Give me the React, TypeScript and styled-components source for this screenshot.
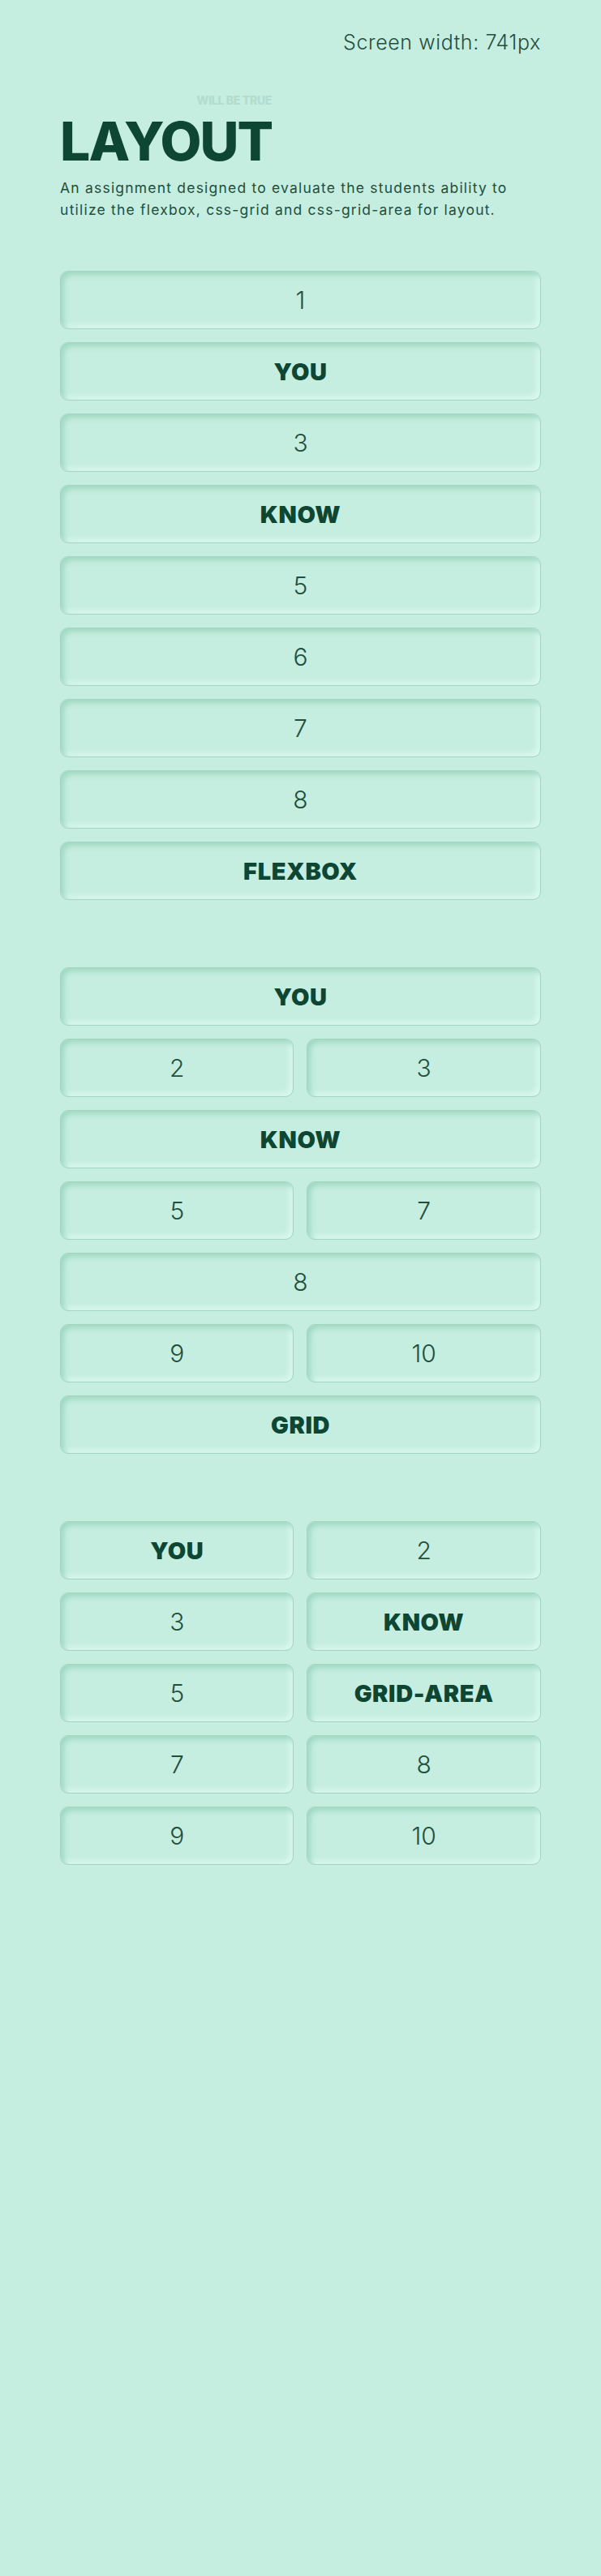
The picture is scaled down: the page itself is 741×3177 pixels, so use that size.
import React from 'react';
import styled, { createGlobalStyle } from 'styled-components';

const Color = {
  bg: '#c5ede0',
  ink: '#0d4633',
  inkSoft: '#1f4f3d',
  ghost: '#b2dccc',
  edgeDark: '#a0d9c3',
  edgeLight: '#daf9ee',
  border: '#a6d4c2'
};

const GlobalStyle = createGlobalStyle`
  html, body {
    margin: 0;
    padding: 0;
    background: ${Color.bg};
  }
  body {
    font-family: Inter, "Open Sans", sans-serif;
    color: ${Color.ink};
    min-height: 100vh;
  }
`;

const Page = styled.div`
  width: 80%;
  margin: 0 auto;
  padding-bottom: 80px;
`;

const ScreenWidth = styled.p`
  margin: 0;
  padding-top: 35px;
  text-align: right;
  font-size: 25px;
  font-weight: 300;
  line-height: 34px;
  letter-spacing: 0.6px;
  color: ${Color.inkSoft};
`;

const Header = styled.header`
  margin-top: 44px;
`;

const TitleBlock = styled.div`
  display: inline-flex;
  flex-direction: column;
`;

const Tagline = styled.span`
  align-self: flex-end;
  font-size: 14px;
  font-weight: 800;
  line-height: 16px;
  letter-spacing: -0.3px;
  color: ${Color.ghost};
`;

const Title = styled.h1`
  margin: 9px 0 0;
  font-size: 66px;
  font-weight: 800;
  line-height: 66px;
  letter-spacing: -2px;
  color: ${Color.ink};
`;

const Intro = styled.p`
  max-width: 572px;
  margin: 11px 0 0;
  font-size: 17.5px;
  font-weight: 400;
  line-height: 27px;
  letter-spacing: 1.2px;
  color: ${Color.inkSoft};
`;

const FlexSection = styled.section`
  display: flex;
  flex-direction: column;
  gap: 16px;
  margin-top: 62px;
`;

const GridSection = styled.section`
  display: grid;
  grid-template-columns: 1fr 1fr;
  gap: 16px;
  margin-top: 83px;
`;

const AreaSection = styled.section`
  display: grid;
  grid-template-columns: 1fr 1fr;
  grid-template-areas:
    'you two'
    'three know'
    'five gridarea'
    'seven eight'
    'nine ten';
  gap: 16px;
  margin-top: 83px;
`;

const Box = styled.div<{ $word?: boolean; $wide?: boolean; $area?: string }>`
  box-sizing: border-box;
  height: 72px;
  display: flex;
  align-items: center;
  justify-content: center;
  border: 1px solid ${Color.border};
  border-radius: 10px;
  background: ${Color.bg};
  box-shadow: inset 4px 4px 6px ${Color.edgeDark},
    inset -4px -4px 6px ${Color.edgeLight};
  font-size: ${p => (p.$word ? '29px' : '30px')};
  font-weight: ${p => (p.$word ? 900 : 300)};
  letter-spacing: ${p => (p.$word ? '0.6px' : '0')};
  color: ${p => (p.$word ? Color.ink : Color.inkSoft)};
  ${p => (p.$wide ? 'grid-column: 1 / -1;' : '')}
  ${p => (p.$area ? `grid-area: ${p.$area};` : '')}
`;

type Item = { label: string; word?: boolean; wide?: boolean; area?: string };

const flexItems: Item[] = [
  { label: '1' },
  { label: 'YOU', word: true },
  { label: '3' },
  { label: 'KNOW', word: true },
  { label: '5' },
  { label: '6' },
  { label: '7' },
  { label: '8' },
  { label: 'FLEXBOX', word: true }
];

const gridItems: Item[] = [
  { label: 'YOU', word: true, wide: true },
  { label: '2' },
  { label: '3' },
  { label: 'KNOW', word: true, wide: true },
  { label: '5' },
  { label: '7' },
  { label: '8', wide: true },
  { label: '9' },
  { label: '10' },
  { label: 'GRID', word: true, wide: true }
];

const areaItems: Item[] = [
  { label: 'YOU', word: true, area: 'you' },
  { label: '2', area: 'two' },
  { label: '3', area: 'three' },
  { label: 'KNOW', word: true, area: 'know' },
  { label: '5', area: 'five' },
  { label: 'GRID-AREA', word: true, area: 'gridarea' },
  { label: '7', area: 'seven' },
  { label: '8', area: 'eight' },
  { label: '9', area: 'nine' },
  { label: '10', area: 'ten' }
];

const renderItems = (items: Item[]) =>
  items.map((item, i) => (
    <Box key={i} $word={item.word} $wide={item.wide} $area={item.area}>
      {item.label}
    </Box>
  ));

const App: React.FC = () => {
  return (
    <>
      <GlobalStyle />
      <Page>
        <ScreenWidth>Screen width: 741px</ScreenWidth>
        <Header>
          <TitleBlock>
            <Tagline>WILL BE TRUE</Tagline>
            <Title>LAYOUT</Title>
          </TitleBlock>
          <Intro>
            An assignment designed to evaluate the students ability to utilize
            the flexbox, css-grid and css-grid-area for layout.
          </Intro>
        </Header>
        <FlexSection>{renderItems(flexItems)}</FlexSection>
        <GridSection>{renderItems(gridItems)}</GridSection>
        <AreaSection>{renderItems(areaItems)}</AreaSection>
      </Page>
    </>
  );
};

export default App;
